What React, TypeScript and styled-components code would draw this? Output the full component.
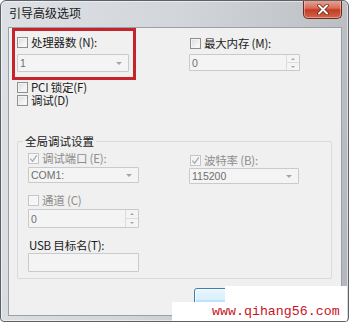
import React from 'react'
import styled, { createGlobalStyle } from 'styled-components'

const GlobalStyle = createGlobalStyle`
  html, body {
    margin: 0;
    padding: 0;
    background: #ffffff;
  }
  body {
    font-family: "Noto Sans CJK SC", "Liberation Sans", sans-serif;
    font-size: 11.5px;
    color: #1b1b1b;
  }
`

interface CheckProps {
  label: string
  checked?: boolean
  disabled?: boolean
  height?: number
  mt?: number
  ml?: number
}

function CheckOption(props: CheckProps) {
  const { label, checked, disabled, height = 15, mt = 0, ml = 0 } = props
  return (
    <CheckRow $h={height} $mt={mt} $ml={ml}>
      <Box $disabled={disabled}>
        {checked && (
          <svg width="9" height="9" viewBox="0 0 9 9">
            <path d="M1.2 4.6 L3.6 7.2 L7.8 1.4" fill="none" stroke={disabled ? '#a9abad' : '#3c3c3c'} strokeWidth="1.3" />
          </svg>
        )}
      </Box>
      <LabelText $disabled={disabled}>{label}</LabelText>
    </CheckRow>
  )
}

export default function App() {
  return (
    <>
      <GlobalStyle />
      <Window>
        <TitleBar>
          <Title>引导高级选项</Title>
          <CloseButton>
            <svg width="12" height="11" viewBox="0 0 12 11">
              <path d="M2 1.5 L10 9.5 M10 1.5 L2 9.5" stroke="#6a1a10" strokeWidth="3.4" strokeLinecap="round" />
              <path d="M2 1.5 L10 9.5 M10 1.5 L2 9.5" stroke="#ffffff" strokeWidth="2" strokeLinecap="round" />
            </svg>
          </CloseButton>
        </TitleBar>
        <Client>
          <TopGrid>
            <Highlight>
              <CheckOption label="处理器数 (N):" />
              <Combo $w={112} $h={18} $mt={4}>
                <span>1</span>
                <Arrow />
              </Combo>
            </Highlight>
            <Column>
              <CheckOption label="最大内存 (M):" mt={8} ml={1} />
              <Combo $w={111} $h={17} $mt={3}>
                <span>0</span>
                <SpinButtons>
                  <SpinHalf><UpTri /></SpinHalf>
                  <SpinHalf><DownTri /></SpinHalf>
                </SpinButtons>
              </Combo>
            </Column>
          </TopGrid>
          <CheckOption label="PCI 锁定(F)" height={13} mt={1} ml={8} />
          <CheckOption label="调试(D)" height={13} ml={8} />

          <Group>
            <Legend>全局调试设置</Legend>
            <GroupGrid>
              <Column>
                <CheckOption label="调试端口 (E):" checked disabled />
                <Combo $w={111} $h={16} $mt={1}>
                  <span>COM1:</span>
                  <Arrow />
                </Combo>
                <CheckOption label="通道 (C)" disabled mt={10} />
                <Combo $w={111} $h={19} $mt={1}>
                  <span>0</span>
                  <SpinButtons>
                    <SpinHalf><UpTri /></SpinHalf>
                    <SpinHalf><DownTri /></SpinHalf>
                  </SpinButtons>
                </Combo>
                <FieldLabel>USB 目标名(T):</FieldLabel>
                <Combo $w={111} $h={19} $mt={1} />
              </Column>
              <Column>
                <CheckOption label="波特率 (B):" checked disabled mt={2} ml={1} />
                <Combo $w={110} $h={16}>
                  <span>115200</span>
                  <Arrow />
                </Combo>
              </Column>
            </GroupGrid>
          </Group>

          {/* button captions sit under the watermark in the screenshot */}
          <ButtonRow>
            <Button $primary />
            <Button />
          </ButtonRow>
        </Client>

        <WatermarkTab />
        <Watermark>www.qihang56.com</Watermark>
      </Window>
    </>
  )
}

const Window = styled.div`
  position: relative;
  width: 349px;
  height: 322px;
  box-sizing: border-box;
  border: 1px solid #5c6167;
  border-radius: 6px 6px 4px 4px;
  background: linear-gradient(100deg, #dde0e4 0%, #d2d6da 45%, #bfc3c8 80%, #b3b7bc 100%);
  box-shadow: inset 0 0 0 1px rgba(255, 255, 255, 0.5);
  display: flex;
  flex-direction: column;
  overflow: hidden;
`
const TitleBar = styled.div`
  height: 26px;
  display: flex;
  align-items: flex-start;
  padding-left: 8px;
  flex: none;
`
const Title = styled.div`
  margin-top: 5px;
  font-size: 12px;
  line-height: 14px;
  color: #1a1a1a;
`
const CloseButton = styled.div`
  margin-left: auto;
  margin-right: 6px;
  margin-top: -1px;
  width: 39px;
  height: 19px;
  box-sizing: border-box;
  border: 1px solid #6f2a22;
  border-top: none;
  border-radius: 0 0 5px 5px;
  background: linear-gradient(to bottom, #e9a99c 0%, #d86d58 45%, #c23c22 55%, #d2654c 100%);
  box-shadow: inset 0 0 0 1px rgba(255, 220, 210, 0.45);
  display: flex;
  align-items: center;
  justify-content: center;
`
const Client = styled.div`
  flex: 1;
  margin: 0 6px 5px 7px;
  background: #f0f0f0;
  border: 1px solid #9ba0a6;
  display: flex;
  flex-direction: column;
`
const TopGrid = styled.div`
  display: grid;
  grid-template-columns: 177px 1fr;
  padding-left: 3px;
  align-items: start;
`
const Highlight = styled.div`
  width: 124px;
  box-sizing: border-box;
  border: 3px solid #c5242c;
  padding: 4px 0 5px 2px;
`
const Column = styled.div`
  display: flex;
  flex-direction: column;
`
const CheckRow = styled.div<{ $h: number; $mt: number; $ml: number }>`
  display: flex;
  align-items: center;
  gap: 3px;
  height: ${p => p.$h}px;
  line-height: ${p => p.$h}px;
  margin-top: ${p => p.$mt}px;
  margin-left: ${p => p.$ml}px;
  white-space: nowrap;
`
const Box = styled.span<{ $disabled?: boolean }>`
  flex: none;
  width: 11px;
  height: 11px;
  box-sizing: border-box;
  border: 1px solid ${p => (p.$disabled ? '#c3c5c8' : '#8e8f90')};
  background: ${p =>
    p.$disabled ? '#f4f4f4' : 'linear-gradient(135deg, #d9d9d9 0%, #f1f1f1 60%, #ffffff 100%)'};
  box-shadow: inset 0 0 0 1px ${p => (p.$disabled ? '#f8f8f8' : '#f3f3f3')};
  display: flex;
  align-items: center;
  justify-content: center;
`
const LabelText = styled.span<{ $disabled?: boolean }>`
  color: ${p => (p.$disabled ? '#8e8e8e' : '#1b1b1b')};
  letter-spacing: -0.2px;
`
const Combo = styled.div<{ $w: number; $h: number; $mt?: number }>`
  width: ${p => p.$w}px;
  height: ${p => p.$h}px;
  margin-top: ${p => p.$mt ?? 0}px;
  box-sizing: border-box;
  border: 1px solid #c8cacc;
  border-radius: 1px;
  background: #f4f4f4;
  display: flex;
  align-items: center;
  padding-left: 2px;
  font-family: "Liberation Sans", "DejaVu Sans", sans-serif;
  font-size: 10.5px;
  color: #6f6f6f;
`
const Arrow = styled.span`
  margin-left: auto;
  margin-right: 6px;
  width: 0;
  height: 0;
  border-left: 3px solid transparent;
  border-right: 3px solid transparent;
  border-top: 3px solid #a5a5a5;
`
const SpinButtons = styled.div`
  margin-left: auto;
  width: 13px;
  height: 100%;
  box-sizing: border-box;
  border-left: 1px solid #dcdcdc;
  display: flex;
  flex-direction: column;
`
const SpinHalf = styled.div`
  flex: 1;
  display: flex;
  align-items: center;
  justify-content: center;
  & + & {
    border-top: 1px solid #dcdcdc;
  }
`
const UpTri = styled.span`
  width: 0;
  height: 0;
  border-left: 2px solid transparent;
  border-right: 2px solid transparent;
  border-bottom: 2px solid #a5a5a5;
`
const DownTri = styled.span`
  width: 0;
  height: 0;
  border-left: 2px solid transparent;
  border-right: 2px solid transparent;
  border-top: 2px solid #a5a5a5;
`
const Group = styled.fieldset`
  margin: 27px 9px 0 8px;
  padding: 3px 0 6px 10px;
  border: 1px solid #d5dbe0;
  border-radius: 2px;
  min-width: 0;
`
const Legend = styled.legend`
  margin-left: -5px;
  padding: 0 2px;
  line-height: 14px;
  color: #1b1b1b;
`
const GroupGrid = styled.div`
  display: grid;
  grid-template-columns: 161px 1fr;
  align-items: start;
`
const FieldLabel = styled.div`
  margin-top: 10px;
  margin-left: 1px;
  line-height: 14px;
  color: #1b1b1b;
  white-space: nowrap;
  letter-spacing: -0.2px;
`
const ButtonRow = styled.div`
  display: flex;
  justify-content: flex-end;
  gap: 6px;
  margin-top: 9px;
  padding-right: 9px;
`
const Button = styled.div<{ $primary?: boolean }>`
  width: 66px;
  height: 23px;
  box-sizing: border-box;
  border: 1px solid ${p => (p.$primary ? '#3c7fb1' : '#707070')};
  border-radius: 3px;
  background: ${p =>
    p.$primary
      ? 'linear-gradient(to bottom, #eaf6fd 0%, #d9f0fc 50%, #bee6fd 51%, #a7d9f5 100%)'
      : 'linear-gradient(to bottom, #f2f2f2 0%, #ebebeb 50%, #dddddd 51%, #cfcfcf 100%)'};
  box-shadow: inset 0 0 0 1px rgba(255, 255, 255, 0.7);
`
const WatermarkTab = styled.div`
  position: absolute;
  left: 224px;
  top: 285px;
  right: 1px;
  height: 17px;
  background: #ffffff;
`
const Watermark = styled.div`
  position: absolute;
  left: 171px;
  top: 301px;
  right: 1px;
  height: 19px;
  background: #ffffff;
  box-sizing: border-box;
  padding-left: 40px;
  font-family: "Liberation Mono", "DejaVu Sans Mono", monospace;
  font-size: 13.3px;
  line-height: 19px;
  color: #c8141e;
  white-space: nowrap;
`
